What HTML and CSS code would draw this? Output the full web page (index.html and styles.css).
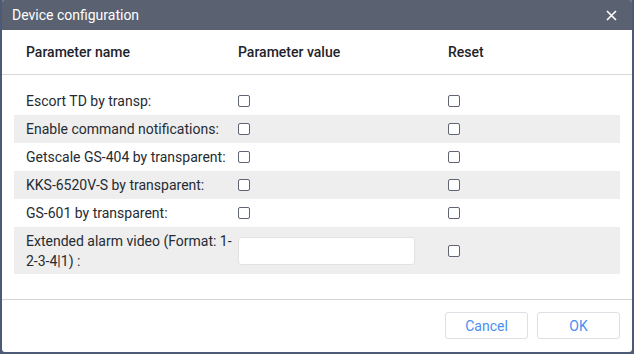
FILE: index.html
```html
<!DOCTYPE html>
<html lang="en">
<head>
    <meta charset="UTF-8">
    <title>Device configuration</title>
    <link rel="stylesheet" href="styles.css">
</head>
<body>

    <div class="dialog">
        <div class="dialog-header">
            <span class="dialog-title">Device configuration</span>
            <button class="close-btn" aria-label="Close">
                <svg width="11" height="11" viewBox="0 0 11 11">
                    <path d="M1 1L10 10M10 1L1 10" stroke="#fff" stroke-width="1.6" fill="none"/>
                </svg>
            </button>
        </div>

        <div class="param-head">
            <div>Parameter name</div>
            <div>Parameter value</div>
            <div>Reset</div>
        </div>

        <div class="param-list">
            <div class="param-row">
                <div class="param-name">Escort TD by transp:</div>
                <div><input type="checkbox" class="check"></div>
                <div><input type="checkbox" class="check"></div>
            </div>
            <div class="param-row">
                <div class="param-name">Enable command notifications:</div>
                <div><input type="checkbox" class="check"></div>
                <div><input type="checkbox" class="check"></div>
            </div>
            <div class="param-row">
                <div class="param-name">Getscale GS-404 by transparent:</div>
                <div><input type="checkbox" class="check"></div>
                <div><input type="checkbox" class="check"></div>
            </div>
            <div class="param-row">
                <div class="param-name">KKS-6520V-S by transparent:</div>
                <div><input type="checkbox" class="check"></div>
                <div><input type="checkbox" class="check"></div>
            </div>
            <div class="param-row">
                <div class="param-name">GS-601 by transparent:</div>
                <div><input type="checkbox" class="check"></div>
                <div><input type="checkbox" class="check"></div>
            </div>
            <div class="param-row tall">
                <div class="param-name">Extended alarm video (Format: 1-2-3-4|1) :</div>
                <div><input type="text" class="text-input"></div>
                <div><input type="checkbox" class="check"></div>
            </div>
        </div>

        <div class="dialog-footer">
            <button class="btn">Cancel</button>
            <button class="btn">OK</button>
        </div>
    </div>

</body>
</html>
```

FILE: styles.css
```css
body {
    margin: 0;
    background-color: #4d5a76;
    font-family: 'Roboto', 'Liberation Sans', sans-serif;
    font-size: 14px;
    color: #262b33;
}
.dialog {
    width: 630px;
    height: 352px;
    margin: 0 2px;
    background-color: #fff;
    border-radius: 3px;
    overflow: hidden;
    display: flex;
    flex-direction: column;
}
.dialog-header {
    height: 30px;
    flex-shrink: 0;
    background-color: #5a6171;
    color: #fff;
    display: flex;
    align-items: center;
    justify-content: space-between;
    padding: 0 15px 0 10px;
}
.dialog-title {
    font-size: 14px;
}
.close-btn {
    background: none;
    border: none;
    padding: 0;
    width: 11px;
    height: 11px;
    display: flex;
    cursor: pointer;
}
.param-head,
.param-row {
    display: grid;
    grid-template-columns: 212px 210px 1fr;
    align-items: center;
}
.param-head {
    height: 44px;
    flex-shrink: 0;
    padding-left: 24px;
    border-bottom: 1px solid #d8d8d8;
    font-weight: 500;
    color: #1f232b;
}
.param-list {
    flex: 1;
    padding: 12px 12px 0 12px;
}
.param-row {
    height: 28px;
    padding-left: 12px;
}
.param-row:nth-child(even) {
    background-color: #eeeeee;
}
.param-row.tall {
    height: 47px;
}
.param-name {
    padding-right: 6px;
    line-height: 20px;
}
.check {
    appearance: none;
    -webkit-appearance: none;
    display: block;
    width: 12px;
    height: 12px;
    margin: 0;
    border: 1.5px solid #5f6472;
    border-radius: 2px;
    background-color: #fff;
}
.text-input {
    display: block;
    box-sizing: border-box;
    width: 177px;
    height: 28px;
    margin: 0;
    border: 1px solid #e2e2e2;
    border-radius: 3px;
    background-color: #fff;
}
.dialog-footer {
    flex-shrink: 0;
    border-top: 1px solid #d4d4d4;
    padding: 12px 12px 13px;
    display: flex;
    justify-content: flex-end;
    gap: 9px;
}
.btn {
    width: 83px;
    height: 27px;
    background-color: #fff;
    border: 1px solid #dcdfe3;
    border-radius: 3px;
    color: #4b8ef1;
    font-family: 'Roboto', 'Liberation Sans', sans-serif;
    font-size: 14px;
    cursor: pointer;
}
```
